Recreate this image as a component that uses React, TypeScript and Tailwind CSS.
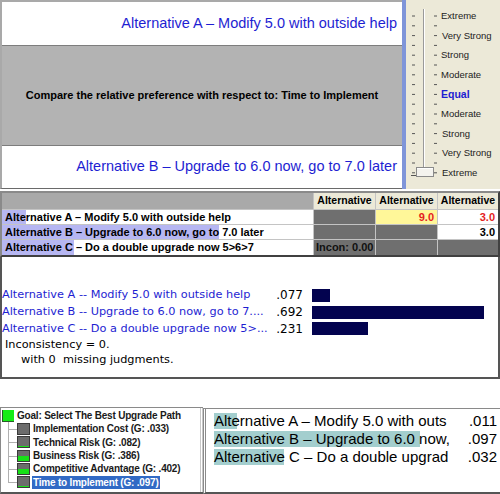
import React from "react";

const ALT_BLUE = "text-[#1e1ed2]";

function SliderDrawing() {
  const ticks: number[] = [];
  for (let k = 0; k <= 16; k++) ticks.push(16 + k * 9.8);
  return (
    <svg className="absolute inset-0" width="94" height="189" viewBox="0 0 94 189">
      {ticks.map((y, i) => (
        <g key={i}>
          <line x1="6" x2="9" y1={y} y2={y} stroke="#555" strokeWidth="1" />
          <line x1="28" x2="31" y1={y} y2={y} stroke="#555" strokeWidth="1" />
        </g>
      ))}
      <line x1="17.5" x2="17.5" y1="9" y2="172" stroke="#9a9a9a" strokeWidth="1" />
      <line x1="18.5" x2="18.5" y1="9" y2="172" stroke="#ffffff" strokeWidth="1" />
      <rect x="10.5" y="167.5" width="17" height="9" fill="#f4f3ee" stroke="#8a8a8a" strokeWidth="1" />
      <line x1="11" x2="27" y1="168.5" y2="168.5" stroke="#ffffff" strokeWidth="1" />
      <line x1="5" x2="10" y1="175.5" y2="175.5" stroke="#555" strokeWidth="1" />
    </svg>
  );
}

const sliderLabels = [
  "Extreme",
  "Very Strong",
  "Strong",
  "Moderate",
  "Equal",
  "Moderate",
  "Strong",
  "Very Strong",
  "Extreme",
];

function TableRow({
  label,
  bar,
  cells,
  h,
}: {
  label: string;
  bar: number;
  cells: React.ReactNode[];
  h: string;
}) {
  return (
    <>
      <div className={`relative ${h} bg-white flex items-center`}>
        <div className="absolute left-0 top-0 bottom-0 bg-[#b6b6f2]" style={{ width: bar }} />
        <span className="relative pl-[3px] text-[11px] font-bold text-black whitespace-nowrap">{label}</span>
      </div>
      {cells}
    </>
  );
}

function TreeItem({
  label,
  green,
  last,
  selected,
}: {
  label: string;
  green: number;
  last?: boolean;
  selected?: boolean;
}) {
  return (
    <div className="flex items-center h-[13.3px]">
      <div className="relative w-[16px] h-full shrink-0">
        <div
          className={`absolute left-[7px] top-0 w-px bg-[#b0b0b0] ${last ? "h-1/2" : "h-full"}`}
        />
        <div className="absolute left-[7px] top-1/2 w-[9px] h-px bg-[#b0b0b0]" />
      </div>
      <div className="relative w-[13px] h-[12px] bg-[#6c6c6c] border border-[#3a3a3a] shrink-0 flex flex-col justify-end">
        {green > 0 && <div className="w-full bg-[#18e018]" style={{ height: green }} />}
      </div>
      <span
        className={`ml-[2px] px-[1px] text-[10px] tracking-[-0.2px] font-bold whitespace-nowrap leading-[13px] ${
          selected ? "bg-[#316ac5] text-white" : "text-[#1a1a1a]"
        }`}
      >
        {label}
      </span>
    </div>
  );
}

export default function App() {
  return (
    <div className="w-[500px] h-[494px] overflow-hidden bg-white flex flex-col font-['Liberation_Sans',Arial,sans-serif]">
      {/* Panel 1: comparison */}
      <div className="flex h-[189px] shrink-0">
        <div className="w-[402px] flex flex-col border-l-2 border-t-2 border-[#a9a9a9] border-b border-b-[#6a6a6a]">
          <div className={`h-[43px] flex items-center justify-end pr-[5px] text-[14.5px] ${ALT_BLUE}`}>
            Alternative A – Modify 5.0 with outside help
          </div>
          <div className="h-[101px] bg-[#b3b3b3] border-t border-b border-[#7d7d7d] flex items-center justify-center text-[11px] font-bold text-black">
            Compare the relative preference with respect to: Time to Implement
          </div>
          <div className={`flex-1 flex items-center justify-end pr-[5px] text-[14.5px] ${ALT_BLUE}`}>
            Alternative B – Upgrade to 6.0 now, go to 7.0 later
          </div>
        </div>
        <div className="w-[4px] bg-[#7f95d9]" />
        <div className="relative flex-1 bg-[#ece9d8]">
          <SliderDrawing />
          <div className="relative pl-[35px] pt-[6.5px] flex flex-col">
            {sliderLabels.map((l, i) => (
              <div
                key={i}
                className={`h-[19.6px] flex items-center whitespace-nowrap ${
                  l === "Equal"
                    ? "text-[10.5px] font-bold text-[#1e1ed2]"
                    : "text-[9.5px] text-[#222]"
                } ${i === 1 || i === 7 || i === 6 || i === 8 ? "pl-[1px]" : ""}`}
              >
                {l}
              </div>
            ))}
          </div>
        </div>
      </div>

      {/* Table */}
      <div className="mt-[2px] border-2 border-t-[#8a8a8a] border-l-[#8a8a8a] border-r-[#404040] border-b-[#404040] grid grid-cols-[311px_61px_61px_1fr] gap-px bg-[#c4c4c4] shrink-0">
        <div className="h-[16px] bg-[#a9a9a9]" />
        {[0, 1, 2].map((i) => (
          <div
            key={i}
            className="h-[16px] bg-[#ece9d8] flex items-center justify-center text-[10.5px] font-bold text-black"
          >
            Alternative
          </div>
        ))}
        <TableRow
          label="Alternative A – Modify 5.0 with outside help"
          bar={24}
          h="h-[14px]"
          cells={[
            <div key="a" className="h-[14px] bg-[#6f6f6f]" />,
            <div key="b" className="h-[14px] bg-[#fff799] flex items-center justify-end pr-[3px] text-[11px] font-bold text-[#e41e1e]">
              9.0
            </div>,
            <div key="c" className="h-[14px] bg-white flex items-center justify-end pr-[3px] text-[11px] font-bold text-[#e41e1e]">
              3.0
            </div>,
          ]}
        />
        <TableRow
          label="Alternative B – Upgrade to 6.0 now, go to 7.0 later"
          bar={217}
          h="h-[14px]"
          cells={[
            <div key="a" className="h-[14px] bg-[#6f6f6f]" />,
            <div key="b" className="h-[14px] bg-[#6f6f6f]" />,
            <div key="c" className="h-[14px] bg-white flex items-center justify-end pr-[3px] text-[11px] font-bold text-black">
              3.0
            </div>,
          ]}
        />
        <TableRow
          label="Alternative C – Do a double upgrade now 5>6>7"
          bar={72}
          h="h-[15px]"
          cells={[
            <div key="a" className="h-[15px] bg-[#6f6f6f] flex items-center pl-[2px] text-[11px] font-bold text-[#111]">
              Incon: 0.00
            </div>,
            <div key="b" className="h-[15px] bg-[#6f6f6f]" />,
            <div key="c" className="h-[15px] bg-[#6f6f6f]" />,
          ]}
        />
      </div>

      {/* Panel 2: priorities */}
      <div className="h-[122px] shrink-0 border-x-2 border-b-2 border-[#555] pt-[30px] font-['DejaVu_Sans',Verdana,sans-serif] text-[11.3px]">
        {[
          { l: "Alternative A -- Modify 5.0 with outside help", v: ".077", w: 18 },
          { l: "Alternative B -- Upgrade to 6.0 now, go to 7....", v: ".692", w: 172 },
          { l: "Alternative C -- Do a double upgrade now 5>...", v: ".231", w: 56 },
        ].map((r, i) => (
          <div key={i} className="flex items-center h-[16.8px]">
            <div className="w-[270px] text-[#1e1ed2] whitespace-nowrap overflow-hidden">{r.l}</div>
            <div className="w-[31px] text-right text-black text-[12px]">{r.v}</div>
            <div className="ml-[9px] h-[13px] bg-[#03034f]" style={{ width: r.w }} />
          </div>
        ))}
        <div className="h-[15.5px] flex items-center pl-[3px] text-black">Inconsistency = 0.</div>
        <div className="h-[15.5px] flex items-center pl-[19px] text-black">with 0&nbsp; missing judgments.</div>
      </div>

      {/* Panel 3 */}
      <div className="flex-1 flex pt-[28px]">
        <div className="w-[203px] border-t border-l border-b-2 border-[#8a8a8a] border-b-[#555] flex">
          <div className="flex-1 pt-[1px]">
            <div className="flex items-center h-[13.3px]">
              <div className="w-[12px] h-[12px] ml-[1px] bg-[#16ec16] border-l border-b border-[#2a5a2a] shrink-0" />
              <span className="ml-[3px] text-[10px] tracking-[-0.2px] font-bold text-[#1a1a1a] whitespace-nowrap">
                Goal: Select The Best Upgrade Path
              </span>
            </div>
            <TreeItem label="Implementation Cost (G: .033)" green={0} />
            <TreeItem label="Technical Risk (G: .082)" green={1} />
            <TreeItem label="Business Risk (G: .386)" green={5} />
            <TreeItem label="Competitive Advantage (G: .402)" green={5} />
            <TreeItem label="Time to Implement (G: .097)" green={1} last selected />
          </div>
          <div className="w-[3px] border-l border-r border-[#c8c8c8]" />
        </div>
        <div className="flex-1 mt-[1px] border-t border-[#8a8a8a] border-l-[3px] border-l-[#8a8a8a] border-double border-b-2 border-b-[#555] pl-[8px] pt-[3px] text-[15px] text-black">
          {[
            { l: "Alternative A – Modify 5.0 with outs", v: ".011", w: 23 },
            { l: "Alternative B – Upgrade to 6.0 now,", v: ".097", w: 206 },
            { l: "Alternative C – Do a double upgrad", v: ".032", w: 70 },
          ].map((r, i) => (
            <div key={i} className="flex items-center h-[18px]">
              <div className="relative w-[238px] h-full flex items-center">
                <div className="absolute left-0 top-[1px] h-[16px] bg-[#a3cece]" style={{ width: r.w }} />
                <span className="relative whitespace-nowrap">{r.l}</span>
              </div>
              <div className="w-[30px] ml-[15px] text-right">{r.v}</div>
            </div>
          ))}
        </div>
      </div>
    </div>
  );
}
